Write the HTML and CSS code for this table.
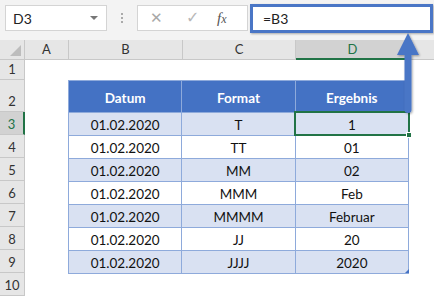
FILE: index.html
```html
<!DOCTYPE html>
<html lang="de">
<head>
    <meta charset="UTF-8">
    <title>Datum Format</title>
    <link rel="stylesheet" href="styles.css">
</head>
<body>
    <div class="window">
        <div class="toolbar">
            <div class="name-box">
                <span>D3</span>
                <span class="drop"></span>
            </div>
            <div class="grip"><i></i><i></i><i></i></div>
            <div class="buttons">
                <span class="btn cancel">&#x2715;</span>
                <span class="btn ok">&#x2713;</span>
                <span class="btn fx"><i>f</i><i class="x">x</i></span>
            </div>
            <div class="formula">=B3</div>
        </div>

        <div class="sheet">
            <div class="corner"><span class="tri"></span></div>
            <div class="col-head">A</div>
            <div class="col-head">B</div>
            <div class="col-head">C</div>
            <div class="col-head active">D</div>
            <div class="col-head last"></div>

            <div class="row-head r1">1</div>
            <div class="row-head r2">2</div>
            <div class="row-head r3 active">3</div>
            <div class="row-head r4">4</div>
            <div class="row-head r5">5</div>
            <div class="row-head r6">6</div>
            <div class="row-head r7">7</div>
            <div class="row-head r8">8</div>
            <div class="row-head r9">9</div>
            <div class="row-head r10">10</div>

            <table class="data">
                <tr class="head">
                    <th>Datum</th>
                    <th>Format</th>
                    <th>Ergebnis</th>
                </tr>
                <tr class="band"><td>01.02.2020</td><td>T</td><td>1</td></tr>
                <tr><td>01.02.2020</td><td>TT</td><td>01</td></tr>
                <tr class="band"><td>01.02.2020</td><td>MM</td><td>02</td></tr>
                <tr><td>01.02.2020</td><td>MMM</td><td>Feb</td></tr>
                <tr class="band"><td>01.02.2020</td><td>MMMM</td><td>Februar</td></tr>
                <tr><td>01.02.2020</td><td>JJ</td><td>20</td></tr>
                <tr class="band last-row"><td>01.02.2020</td><td>JJJJ</td><td>2020</td></tr>
            </table>
        </div>

        <div class="selection"><span class="handle"></span></div>
        <span class="table-corner"></span>

        <svg class="arrow" width="30" height="90" viewBox="0 0 30 90">
            <defs>
                <filter id="shadow" x="-40%" y="-10%" width="180%" height="130%">
                    <feDropShadow dx="1" dy="1" stdDeviation="1" flood-color="#000" flood-opacity="0.35"/>
                </filter>
            </defs>
            <g filter="url(#shadow)" fill="#4a76c6">
                <polygon points="12,1 1,23 23,23"/>
                <path d="M8.5 21 H15.5 V78 Q15.5 81 12 81 Q8.5 81 8.5 78 Z"/>
            </g>
        </svg>
    </div>
</body>
</html>
```

FILE: styles.css
```css
* {
    margin: 0;
    padding: 0;
    box-sizing: border-box;
}

body {
    width: 434px;
    height: 297px;
    overflow: hidden;
    background: #ffffff;
    font-family: "Lato", "Open Sans", sans-serif;
    color: #222;
}

.window {
    position: relative;
    width: 434px;
    height: 297px;
}

/* formula bar */

.toolbar {
    height: 40px;
    background: #f3f3f3;
    display: flex;
    align-items: flex-start;
    padding-top: 5px;
    padding-left: 5px;
}

.name-box {
    width: 102px;
    height: 26px;
    background: #fff;
    border: 1px solid #d4d4d4;
    display: flex;
    align-items: center;
    justify-content: space-between;
    padding: 0 8px 0 7px;
    font-size: 14px;
    color: #222;
}

.drop {
    width: 0;
    height: 0;
    border-left: 4px solid transparent;
    border-right: 4px solid transparent;
    border-top: 4px solid #777;
}

.grip {
    width: 30px;
    height: 26px;
    display: flex;
    flex-direction: column;
    align-items: center;
    justify-content: center;
    gap: 2px;
}

.grip i {
    width: 2px;
    height: 2px;
    background: #aaa;
}

.buttons {
    width: 111px;
    height: 26px;
    background: #fff;
    border: 1px solid #d4d4d4;
    display: flex;
    align-items: center;
    padding-left: 12px;
}

.btn {
    color: #b0b0b0;
    font-size: 14px;
    line-height: 1;
}

.cancel {
    width: 36px;
    font-family: "DejaVu Sans", sans-serif;
    font-size: 15px;
    color: #a8a8a8;
}

.ok {
    width: 31px;
    font-family: "DejaVu Sans", sans-serif;
    font-size: 16px;
    color: #b8b8b8;
}

.fx {
    font-family: "Liberation Serif", serif;
    color: #555;
    font-size: 15px;
}

.fx .x {
    font-size: 12px;
}

.formula {
    margin-top: -1px;
    margin-left: 2px;
    width: 183px;
    height: 29px;
    background: #fff;
    border: 3px solid #4a76c6;
    box-shadow: 1px 1px 2px rgba(0, 0, 0, 0.3);
    font-size: 14px;
    padding-left: 10px;
    line-height: 23px;
    color: #222;
}

/* sheet grid */

.sheet {
    display: grid;
    grid-template-columns: 25px 44px 114px 113px 114px 1fr;
    grid-template-rows: 20px 20px 32px repeat(8, 23px);
}

.corner {
    background: #e6e6e6;
    border-right: 1px solid #c8c8c8;
    border-bottom: 1px solid #c8c8c8;
    position: relative;
}

.tri {
    position: absolute;
    right: 3px;
    bottom: 3px;
    width: 0;
    height: 0;
    border-left: 11px solid transparent;
    border-bottom: 11px solid #bdbdbd;
}

.col-head {
    background: #e6e6e6;
    border-right: 1px solid #c8c8c8;
    border-bottom: 1px solid #c8c8c8;
    text-align: center;
    font-size: 13px;
    line-height: 19px;
    color: #333;
}

.col-head.active {
    background: #d2d2d2;
    color: #217346;
    border-bottom: 2px solid #217346;
}

.col-head.last {
    border-right: none;
}

.row-head {
    grid-column: 1;
    background: #e6e6e6;
    border-right: 1px solid #c8c8c8;
    border-bottom: 1px solid #c8c8c8;
    font-size: 13px;
    color: #333;
    text-align: center;
    display: flex;
    align-items: flex-end;
    justify-content: center;
    padding-bottom: 2px;
}

.row-head.active {
    background: #d2d2d2;
    color: #217346;
    border-right: 2px solid #217346;
}

/* data table */

.data {
    grid-column: 3 / 6;
    grid-row: 3 / 11;
    border-collapse: collapse;
    table-layout: fixed;
    width: 341px;
    margin-left: -1px;
    font-size: 13.5px;
}

.data th,
.data td {
    border: 1px solid #8eaadb;
    text-align: center;
    vertical-align: bottom;
    padding: 0 0 2px;
    height: 23px;
    color: #111;
}

.data th {
    height: 32px;
    background: #4472c4;
    color: #fff;
    font-weight: 700;
    padding-bottom: 6px;
    border-color: #8eaadb;
}

.data tr.band td {
    background: #d9e1f2;
}

/* selection and annotation */

.selection {
    position: absolute;
    left: 294px;
    top: 111px;
    width: 116px;
    height: 25px;
    border: 2px solid #217346;
}

.handle {
    position: absolute;
    right: -4px;
    bottom: -4px;
    width: 6px;
    height: 6px;
    background: #217346;
    border: 1px solid #fff;
}

.table-corner {
    position: absolute;
    left: 405px;
    top: 269px;
    width: 0;
    height: 0;
    border-left: 4px solid transparent;
    border-bottom: 4px solid #4472c4;
}

.arrow {
    position: absolute;
    left: 396px;
    top: 32px;
}
```
